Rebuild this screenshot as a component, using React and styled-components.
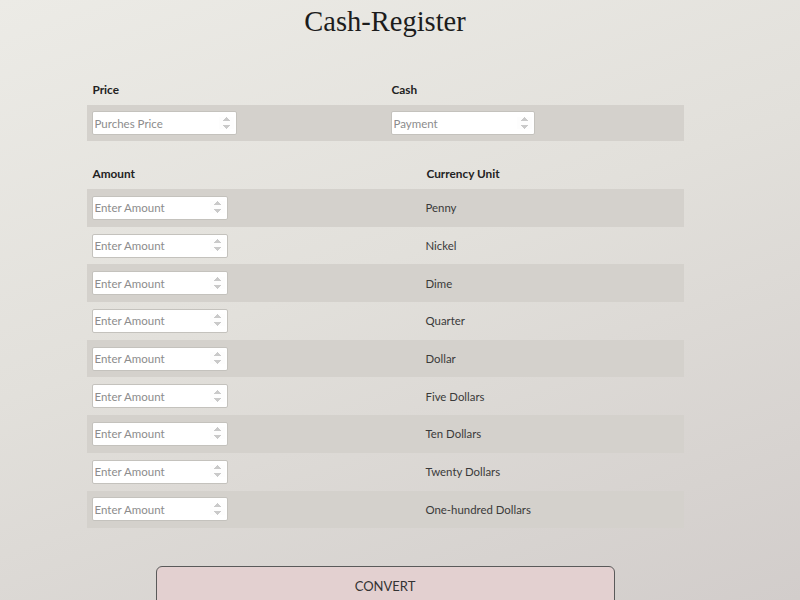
import React from 'react'
import styled, { createGlobalStyle } from 'styled-components'

const GlobalStyle = createGlobalStyle`
    html, body {
        margin: 0;
        padding: 0;
        height: 100%;
    }
    body {
        background: linear-gradient(160deg, #ecebe6 0%, #e2e0db 45%, #d2cdcb 100%);
        font-family: Lato, "Open Sans", sans-serif;
        color: #333;
        overflow: hidden;
    }
`

const Page = styled.div`
    width: 770px;
    height: 600px;
    display: flex;
    flex-direction: column;
    align-items: center;
`

const Title = styled.h1`
    margin: 0;
    height: 40px;
    line-height: 44px;
    font-family: "Liberation Serif", serif;
    font-weight: 400;
    font-size: 28.5px;
    color: #1c1c1c;
`

const Table = styled.div`
    width: 597px;
    display: grid;
    grid-template-columns: ${({ $cols }) => $cols};
    margin-top: ${({ $top }) => $top}px;
`

const Head = styled.div`
    height: 32px;
    display: flex;
    align-items: center;
    padding-left: 6px;
    font-size: 11.8px;
    font-weight: 700;
    color: #222;
`

const Cell = styled.div`
    height: ${({ $h }) => $h || 37.7}px;
    display: flex;
    align-items: center;
    padding-left: 5px;
    font-size: 11.4px;
    color: #3a3a3a;
    background: ${({ $dark }) => ($dark ? '#d4d1cc' : 'transparent')};
`

const Input = styled.input`
    box-sizing: border-box;
    width: ${({ $w }) => $w}px;
    height: 24px;
    padding: 0 2px;
    background: #fff;
    border: 1px solid #c4c2bd;
    border-radius: 2px;
    font-family: Lato, "Open Sans", sans-serif;
    font-size: 11.5px;
    color: #333;
    outline: none;

    &::placeholder {
        color: #8c8c8c;
    }
    &::-webkit-inner-spin-button {
        opacity: 0.45;
    }
`

const Button = styled.button`
    margin-top: 38px;
    width: 459px;
    height: 42px;
    flex-shrink: 0;
    background: #e3d0d0;
    border: 1px solid #5a5a5a;
    border-radius: 6px;
    font-family: Lato, "Open Sans", sans-serif;
    font-size: 13px;
    color: #333;
    padding: 0 0 2px;
`

const units = [
    'Penny',
    'Nickel',
    'Dime',
    'Quarter',
    'Dollar',
    'Five Dollars',
    'Ten Dollars',
    'Twenty Dollars',
    'One-hundred Dollars',
]

export default function App() {
    return (
        <>
            <GlobalStyle />
            <Page>
                <Title>Cash-Register</Title>

                <Table $cols="299px 298px" $top={33}>
                    <Head>Price</Head>
                    <Head>Cash</Head>
                    <Cell $dark $h={36}>
                        <Input type="number" placeholder="Purches Price" $w={145} />
                    </Cell>
                    <Cell $dark $h={36}>
                        <Input type="number" placeholder="Payment" $w={144} />
                    </Cell>
                </Table>

                <Table $cols="334px 263px" $top={16}>
                    <Head>Amount</Head>
                    <Head>Currency Unit</Head>
                    {units.map((unit, i) => (
                        <React.Fragment key={unit}>
                            <Cell $dark={i % 2 === 0}>
                                <Input type="number" placeholder="Enter Amount" $w={136} />
                            </Cell>
                            <Cell $dark={i % 2 === 0}>{unit}</Cell>
                        </React.Fragment>
                    ))}
                </Table>

                <Button>CONVERT</Button>
            </Page>
        </>
    )
}
